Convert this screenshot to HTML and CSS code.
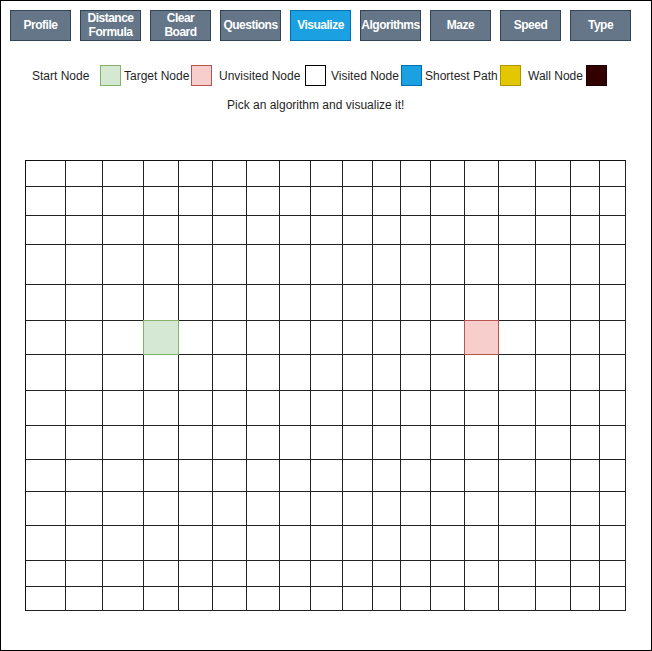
FILE: index.html
```html
<!DOCTYPE html>
<html>
<head>
<meta charset="utf-8">
<link rel="stylesheet" href="styles.css">
</head>
<body>
<div class="page">
  <div class="toolbar">
    <div class="btn">Profile</div>
    <div class="btn">Distance<br>Formula</div>
    <div class="btn">Clear<br>Board</div>
    <div class="btn">Questions</div>
    <div class="btn btn-active">Visualize</div>
    <div class="btn">Algorithms</div>
    <div class="btn">Maze</div>
    <div class="btn">Speed</div>
    <div class="btn">Type</div>
  </div>
  <div class="legend">
    <span class="label">Start Node</span><span class="sw sw-start"></span>
    <span class="label pad3">Target Node</span><span class="sw sw-target"></span>
    <span class="label pad7">Unvisited Node</span><span class="sw sw-unvisited"></span>
    <span class="label pad5">Visited Node</span><span class="sw sw-visited"></span>
    <span class="label pad3">Shortest Path</span><span class="sw sw-path"></span>
    <span class="label pad7">Wall Node</span><span class="sw sw-wall"></span>
  </div>
  <div class="hint">Pick an algorithm and visualize it!</div>
  <div class="board">
    <div class="c"></div><div class="c"></div><div class="c"></div><div class="c"></div><div class="c"></div><div class="c"></div><div class="c"></div><div class="c"></div><div class="c"></div><div class="c"></div><div class="c"></div><div class="c"></div><div class="c"></div><div class="c"></div><div class="c"></div><div class="c"></div><div class="c"></div><div class="c"></div>
    <div class="c"></div><div class="c"></div><div class="c"></div><div class="c"></div><div class="c"></div><div class="c"></div><div class="c"></div><div class="c"></div><div class="c"></div><div class="c"></div><div class="c"></div><div class="c"></div><div class="c"></div><div class="c"></div><div class="c"></div><div class="c"></div><div class="c"></div><div class="c"></div>
    <div class="c"></div><div class="c"></div><div class="c"></div><div class="c"></div><div class="c"></div><div class="c"></div><div class="c"></div><div class="c"></div><div class="c"></div><div class="c"></div><div class="c"></div><div class="c"></div><div class="c"></div><div class="c"></div><div class="c"></div><div class="c"></div><div class="c"></div><div class="c"></div>
    <div class="c"></div><div class="c"></div><div class="c"></div><div class="c"></div><div class="c"></div><div class="c"></div><div class="c"></div><div class="c"></div><div class="c"></div><div class="c"></div><div class="c"></div><div class="c"></div><div class="c"></div><div class="c"></div><div class="c"></div><div class="c"></div><div class="c"></div><div class="c"></div>
    <div class="c"></div><div class="c"></div><div class="c"></div><div class="c"></div><div class="c"></div><div class="c"></div><div class="c"></div><div class="c"></div><div class="c"></div><div class="c"></div><div class="c"></div><div class="c"></div><div class="c"></div><div class="c"></div><div class="c"></div><div class="c"></div><div class="c"></div><div class="c"></div>
    <div class="c"></div><div class="c"></div><div class="c"></div><div class="c start"></div><div class="c"></div><div class="c"></div><div class="c"></div><div class="c"></div><div class="c"></div><div class="c"></div><div class="c"></div><div class="c"></div><div class="c"></div><div class="c target"></div><div class="c"></div><div class="c"></div><div class="c"></div><div class="c"></div>
    <div class="c"></div><div class="c"></div><div class="c"></div><div class="c"></div><div class="c"></div><div class="c"></div><div class="c"></div><div class="c"></div><div class="c"></div><div class="c"></div><div class="c"></div><div class="c"></div><div class="c"></div><div class="c"></div><div class="c"></div><div class="c"></div><div class="c"></div><div class="c"></div>
    <div class="c"></div><div class="c"></div><div class="c"></div><div class="c"></div><div class="c"></div><div class="c"></div><div class="c"></div><div class="c"></div><div class="c"></div><div class="c"></div><div class="c"></div><div class="c"></div><div class="c"></div><div class="c"></div><div class="c"></div><div class="c"></div><div class="c"></div><div class="c"></div>
    <div class="c"></div><div class="c"></div><div class="c"></div><div class="c"></div><div class="c"></div><div class="c"></div><div class="c"></div><div class="c"></div><div class="c"></div><div class="c"></div><div class="c"></div><div class="c"></div><div class="c"></div><div class="c"></div><div class="c"></div><div class="c"></div><div class="c"></div><div class="c"></div>
    <div class="c"></div><div class="c"></div><div class="c"></div><div class="c"></div><div class="c"></div><div class="c"></div><div class="c"></div><div class="c"></div><div class="c"></div><div class="c"></div><div class="c"></div><div class="c"></div><div class="c"></div><div class="c"></div><div class="c"></div><div class="c"></div><div class="c"></div><div class="c"></div>
    <div class="c"></div><div class="c"></div><div class="c"></div><div class="c"></div><div class="c"></div><div class="c"></div><div class="c"></div><div class="c"></div><div class="c"></div><div class="c"></div><div class="c"></div><div class="c"></div><div class="c"></div><div class="c"></div><div class="c"></div><div class="c"></div><div class="c"></div><div class="c"></div>
    <div class="c"></div><div class="c"></div><div class="c"></div><div class="c"></div><div class="c"></div><div class="c"></div><div class="c"></div><div class="c"></div><div class="c"></div><div class="c"></div><div class="c"></div><div class="c"></div><div class="c"></div><div class="c"></div><div class="c"></div><div class="c"></div><div class="c"></div><div class="c"></div>
    <div class="c"></div><div class="c"></div><div class="c"></div><div class="c"></div><div class="c"></div><div class="c"></div><div class="c"></div><div class="c"></div><div class="c"></div><div class="c"></div><div class="c"></div><div class="c"></div><div class="c"></div><div class="c"></div><div class="c"></div><div class="c"></div><div class="c"></div><div class="c"></div>
    <div class="c"></div><div class="c"></div><div class="c"></div><div class="c"></div><div class="c"></div><div class="c"></div><div class="c"></div><div class="c"></div><div class="c"></div><div class="c"></div><div class="c"></div><div class="c"></div><div class="c"></div><div class="c"></div><div class="c"></div><div class="c"></div><div class="c"></div><div class="c"></div>
  </div>
</div>
</body>
</html>
```
FILE: styles.css
```css
html, body {
  margin: 0;
  padding: 0;
  background: #fff;
}
.page {
  box-sizing: border-box;
  width: 652px;
  height: 651px;
  border: 1px solid #000;
  font-family: "Liberation Sans", Arial, sans-serif;
  font-size: 12px;
  color: #1f1f1f;
  padding-top: 9px;
}
.toolbar {
  display: flex;
  gap: 9px;
  padding-left: 9px;
}
.btn {
  box-sizing: border-box;
  width: 61px;
  height: 31px;
  padding-bottom: 2px;
  background: #647687;
  border: 1px solid #314354;
  color: #fff;
  font-weight: bold;
  font-size: 12px;
  letter-spacing: -0.5px;
  line-height: 14px;
  display: flex;
  align-items: center;
  justify-content: center;
  text-align: center;
  white-space: nowrap;
}
.btn-active {
  background: #1ba1e2;
  border-color: #006eaf;
}
.legend {
  display: grid;
  grid-template-columns: 68px 21px 70px 21px 93px 21px 75px 21px 78px 21px 65px 21px;
  align-items: center;
  margin-top: 24px;
  margin-left: 31px;
  height: 21px;
}
.label {
  white-space: nowrap;
  line-height: 14px;
}
.pad3 { padding-left: 3px; }
.pad5 { padding-left: 5px; }
.pad7 { padding-left: 7px; }
.sw {
  box-sizing: border-box;
  width: 21px;
  height: 21px;
  border: 1px solid #000;
}
.sw-start { background: #d5e8d4; border-color: #82b366; }
.sw-target { background: #f8cecc; border-color: #b85450; }
.sw-unvisited { background: #fff; border-color: #000; }
.sw-visited { background: #1ba1e2; border-color: #006eaf; }
.sw-path { background: #e3c800; border-color: #b09500; }
.sw-wall { background: #330000; border-color: #1a0000; }
.hint {
  margin-top: 12px;
  padding-left: 226px;
  line-height: 14px;
}
.board {
  display: grid;
  grid-template-columns: 40px 37px 41px 35px 34px 34px 33px 31px 32px 30px 28px 30px 34px 34px 37px 35px 29px 26px;
  grid-template-rows: 26px 29px 29px 40px 36px 34px 36px 35px 34px 32px 34px 35px 26px 24px;
  width: 600px;
  border-left: 1px solid #111;
  border-top: 1px solid #111;
  margin-top: 48px;
  margin-left: 24px;
}
.c {
  box-sizing: border-box;
  border-right: 1px solid #222;
  border-bottom: 1px solid #222;
  position: relative;
}
.start { background: #d5e8d4; }
.target { background: #f8cecc; }
.start::after, .target::after {
  content: "";
  position: absolute;
  top: -1px;
  left: -1px;
  right: -1px;
  bottom: -1px;
  border: 1px solid #82b366;
}
.target::after {
  border-color: #b85450;
}
```
